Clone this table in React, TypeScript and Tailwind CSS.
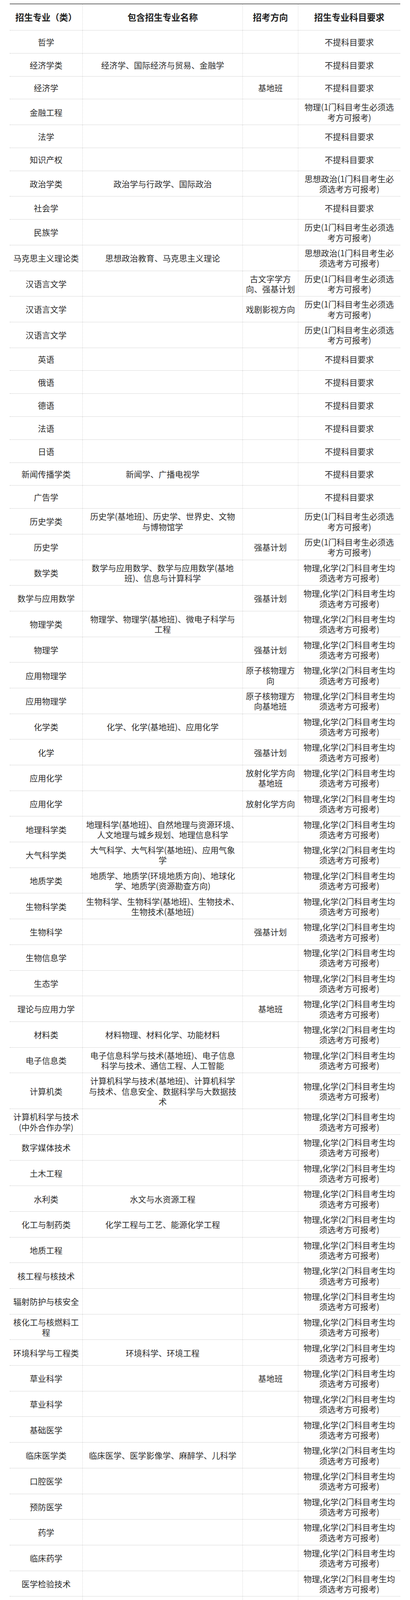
import React from 'react';

const NR = '不提科目要求';
const WL = '物理,化学(2门科目考生均\n须选考方可报考)';
const LS = '历史(1门科目考生必须选\n考方可报考)';
const ZZ = '思想政治(1门科目考生必\n须选考方可报考)';
const PH = '物理(1门科目考生必须选\n考方可报考)';
const HX = '化学(1门科目考生必须选\n考方可报考)';

type Row = [string, string, string, string];

const rows: Row[] = [
  ['哲学', '', '', NR],
  ['经济学类', '经济学、国际经济与贸易、金融学', '', NR],
  ['经济学', '', '基地班', NR],
  ['金融工程', '', '', PH],
  ['法学', '', '', NR],
  ['知识产权', '', '', NR],
  ['政治学类', '政治学与行政学、国际政治', '', ZZ],
  ['社会学', '', '', NR],
  ['民族学', '', '', LS],
  ['马克思主义理论类', '思想政治教育、马克思主义理论', '', ZZ],
  ['汉语言文学', '', '古文字学方\n向、强基计划', LS],
  ['汉语言文学', '', '戏剧影视方向', LS],
  ['汉语言文学', '', '', LS],
  ['英语', '', '', NR],
  ['俄语', '', '', NR],
  ['德语', '', '', NR],
  ['法语', '', '', NR],
  ['日语', '', '', NR],
  ['新闻传播学类', '新闻学、广播电视学', '', NR],
  ['广告学', '', '', NR],
  ['历史学类', '历史学(基地班)、历史学、世界史、文物\n与博物馆学', '', LS],
  ['历史学', '', '强基计划', LS],
  ['数学类', '数学与应用数学、数学与应用数学(基地\n班)、信息与计算科学', '', WL],
  ['数学与应用数学', '', '强基计划', WL],
  ['物理学类', '物理学、物理学(基地班)、微电子科学与\n工程', '', WL],
  ['物理学', '', '强基计划', WL],
  ['应用物理学', '', '原子核物理方\n向', WL],
  ['应用物理学', '', '原子核物理方\n向基地班', WL],
  ['化学类', '化学、化学(基地班)、应用化学', '', WL],
  ['化学', '', '强基计划', WL],
  ['应用化学', '', '放射化学方向\n基地班', WL],
  ['应用化学', '', '放射化学方向', WL],
  ['地理科学类', '地理科学(基地班)、自然地理与资源环境、\n人文地理与城乡规划、地理信息科学', '', WL],
  ['大气科学类', '大气科学、大气科学(基地班)、应用气象\n学', '', WL],
  ['地质学类', '地质学、地质学(环境地质方向)、地球化\n学、地质学(资源勘查方向)', '', WL],
  ['生物科学类', '生物科学、生物科学(基地班)、生物技术、\n生物技术(基地班)', '', WL],
  ['生物科学', '', '强基计划', WL],
  ['生物信息学', '', '', WL],
  ['生态学', '', '', WL],
  ['理论与应用力学', '', '基地班', WL],
  ['材料类', '材料物理、材料化学、功能材料', '', WL],
  ['电子信息类', '电子信息科学与技术(基地班)、电子信息\n科学与技术、通信工程、人工智能', '', WL],
  ['计算机类', '计算机科学与技术(基地班)、计算机科学\n与技术、信息安全、数据科学与大数据技\n术', '', WL],
  ['计算机科学与技术\n(中外合作办学)', '', '', WL],
  ['数字媒体技术', '', '', WL],
  ['土木工程', '', '', WL],
  ['水利类', '水文与水资源工程', '', WL],
  ['化工与制药类', '化学工程与工艺、能源化学工程', '', WL],
  ['地质工程', '', '', WL],
  ['核工程与核技术', '', '', WL],
  ['辐射防护与核安全', '', '', WL],
  ['核化工与核燃料工\n程', '', '', WL],
  ['环境科学与工程类', '环境科学、环境工程', '', WL],
  ['草业科学', '', '基地班', WL],
  ['草业科学', '', '', WL],
  ['基础医学', '', '', WL],
  ['临床医学类', '临床医学、医学影像学、麻醉学、儿科学', '', WL],
  ['口腔医学', '', '', WL],
  ['预防医学', '', '', WL],
  ['药学', '', '', WL],
  ['临床药学', '', '', WL],
  ['医学检验技术', '', '', WL],
  ['护理学', '', '', HX],
  ['管理科学与工程类', '信息管理与信息系统', '', PH],
  ['管理科学', '', '', PH],
  ['工商管理类', '会计学、市场营销、人力资源管理、行政\n管理', '', NR],
  ['农林经济管理', '', '', NR],
  ['公共事业管理', '', '卫生事业管理\n方向', NR],
  ['音乐表演', '', '单簧管', NR],
  ['音乐表演', '', '琵琶', NR],
  ['音乐表演', '', '小提琴、中提\n琴', NR],
  ['音乐表演', '', '钢琴', NR],
  ['音乐表演', '', '中提琴', NR],
  ['音乐表演', '', '二胡', NR],
  ['音乐表演', '', '声乐', NR],
  ['音乐表演', '', '大提琴', NR],
  ['音乐表演', '', '古筝', NR],
  ['音乐表演', '', '小提琴', NR],
  ['音乐表演', '', '手风琴', NR],
  ['戏剧影视文学', '', '', LS],
  ['设计学类', '视觉传达设计、环境设计', '', NR],
];

const headers = ['招生专业（类）', '包含招生专业名称', '招考方向', '招生专业科目要求'];

const gridCols = 'grid grid-cols-[186px_410px_142px_262px]';
const cell = 'flex items-center justify-center text-center px-[6px] whitespace-pre';
const divider = 'border-l border-dotted border-[#cfcfcf]';

export default function App() {
  return (
    <div className="bg-white px-[25px] pt-[9px] pb-[6px] font-[Noto_Sans_CJK_SC,sans-serif] text-[#2e2e2e]">
      <div className="w-[1000px] border-t-2 border-b-2 border-[#6b6b6b]">
        {/* header */}
        <div className={`${gridCols} h-[66px]`}>
          {headers.map((h, i) => (
            <div key={h} className={`${cell} text-[22.5px] font-bold text-[#222] ${i > 0 ? divider : ''}`}>
              {h}
            </div>
          ))}
        </div>

        {rows.map((r, idx) => (
          <div key={idx} className={`${gridCols} min-h-[58.8px] border-t border-dotted border-[#b5b5b5]`}>
            {r.map((c, i) => (
              <div key={i} className={`${cell} py-[6.1px] text-[21px] leading-[26.25px] ${i > 0 ? divider : ''}`}>
                {c}
              </div>
            ))}
          </div>
        ))}
      </div>
    </div>
  );
}
